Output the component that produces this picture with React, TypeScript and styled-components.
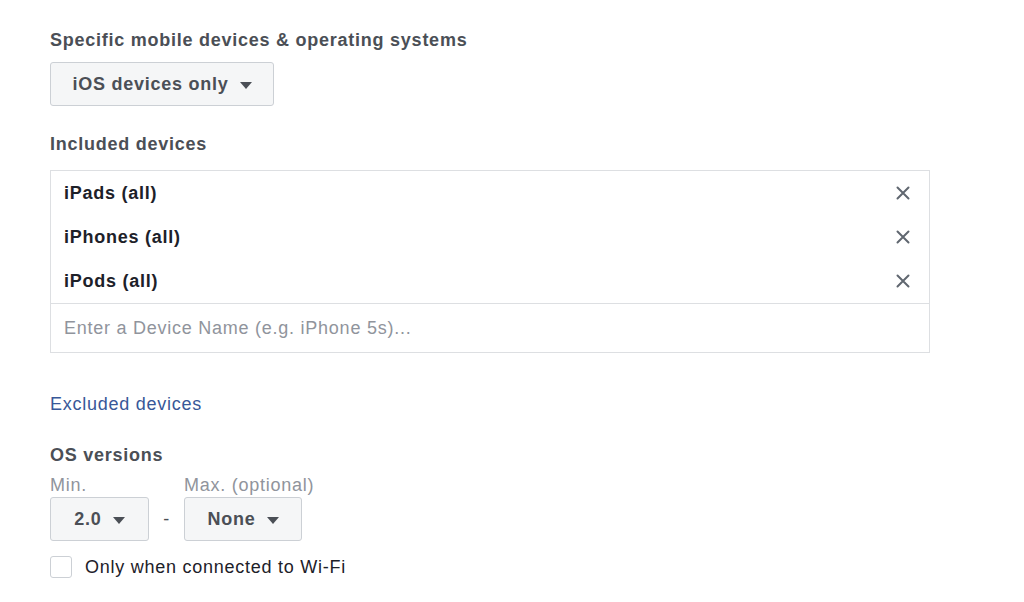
import { createGlobalStyle } from 'styled-components'
import styled from 'styled-components'

const GlobalS = createGlobalStyle`
    body {
        margin: 0;
        background: #fff;
        font-family: "Liberation Sans", Arial, sans-serif;
        letter-spacing: 0.75px;
    }
`

const PageS = styled.div`
    display: flex;
    flex-direction: column;
    width: 880px;
    padding: 29px 0 0 50px;
`

const LabelS = styled.div<{ mt?: number }>`
    font-size: 18px;
    font-weight: 700;
    color: #4b4f56;
    line-height: 22px;
    margin-top: ${ ({ mt }) => mt || 0 }px;
`

const SelectS = styled.button<{ w: number }>`
    display: flex;
    align-items: center;
    justify-content: center;
    gap: 11px;
    width: ${ ({ w }) => w }px;
    height: 44px;
    padding: 0;
    border: 1px solid #ccd0d5;
    border-radius: 3px;
    background: #f5f6f7;
    font-family: inherit;
    letter-spacing: inherit;
    font-size: 18px;
    font-weight: 700;
    color: #4b4f56;
`

const CaretS = styled.span`
    width: 0;
    height: 0;
    border-left: 6px solid transparent;
    border-right: 6px solid transparent;
    border-top: 7px solid #4b4f56;
    margin-top: 2px;
`

const BoxS = styled.div`
    margin-top: 15px;
    border: 1px solid #dddfe2;
    display: flex;
    flex-direction: column;
`

const ListS = styled.div`
    display: flex;
    flex-direction: column;
    border-bottom: 1px solid #dddfe2;
`

const RowS = styled.div`
    display: flex;
    align-items: center;
    justify-content: space-between;
    height: 44px;
    padding: 0 19px 0 13px;
    font-size: 18px;
    font-weight: 700;
    color: #1d2129;
`

const XS = styled.svg`
    width: 14px;
    height: 14px;
`

const InputS = styled.div`
    height: 48px;
    display: flex;
    align-items: center;
    padding: 0 13px;
    font-size: 18px;
    color: #90949c;
`

const LinkS = styled.a`
    margin-top: 40px;
    font-size: 18px;
    line-height: 22px;
    color: #385898;
    text-decoration: none;
`

const SubLblS = styled.div`
    font-size: 18px;
    color: #90949c;
    line-height: 22px;
`

const VersionsS = styled.div`
    display: flex;
    align-items: flex-end;
    margin-top: 8px;
`

const ColS = styled.div`
    display: flex;
    flex-direction: column;
    gap: 1px;
`

const DashS = styled.span`
    width: 35px;
    height: 44px;
    display: flex;
    align-items: center;
    justify-content: center;
    font-size: 18px;
    color: #4b4f56;
`

const CheckRowS = styled.label`
    display: flex;
    align-items: center;
    gap: 13px;
    margin-top: 15px;
    font-size: 18px;
    color: #1d2129;
`

const CheckS = styled.span`
    width: 20px;
    height: 20px;
    border: 1px solid #ccd0d5;
    border-radius: 3px;
    background: #fff;
`

const Remove = () => (
    <XS viewBox="0 0 14 14">
        <path d="M1.5 1.5 L12.5 12.5 M12.5 1.5 L1.5 12.5" stroke="#606770" strokeWidth="2" strokeLinecap="round" />
    </XS>
)

const devices = [ 'iPads (all)', 'iPhones (all)', 'iPods (all)' ]

const App = () => {
    return(
        <>
            <GlobalS />
            <PageS>
                <LabelS>Specific mobile devices &amp; operating systems</LabelS>
                <div style={{ marginTop: 11 }}>
                    <SelectS w={ 224 }>iOS devices only <CaretS /></SelectS>
                </div>
                <LabelS mt={ 27 }>Included devices</LabelS>
                <BoxS>
                    <ListS>
                        {devices.map(d =>
                            <RowS key={ d }>{ d }<Remove /></RowS>
                        )}
                    </ListS>
                    <InputS>Enter a Device Name (e.g. iPhone 5s)...</InputS>
                </BoxS>
                <LinkS href="#">Excluded devices</LinkS>
                <LabelS mt={ 29 }>OS versions</LabelS>
                <VersionsS>
                    <ColS>
                        <SubLblS>Min.</SubLblS>
                        <SelectS w={ 99 }>2.0 <CaretS /></SelectS>
                    </ColS>
                    <DashS>-</DashS>
                    <ColS>
                        <SubLblS>Max. (optional)</SubLblS>
                        <SelectS w={ 118 }>None <CaretS /></SelectS>
                    </ColS>
                </VersionsS>
                <CheckRowS><CheckS />Only when connected to Wi-Fi</CheckRowS>
            </PageS>
        </>
    )
}

export default App
